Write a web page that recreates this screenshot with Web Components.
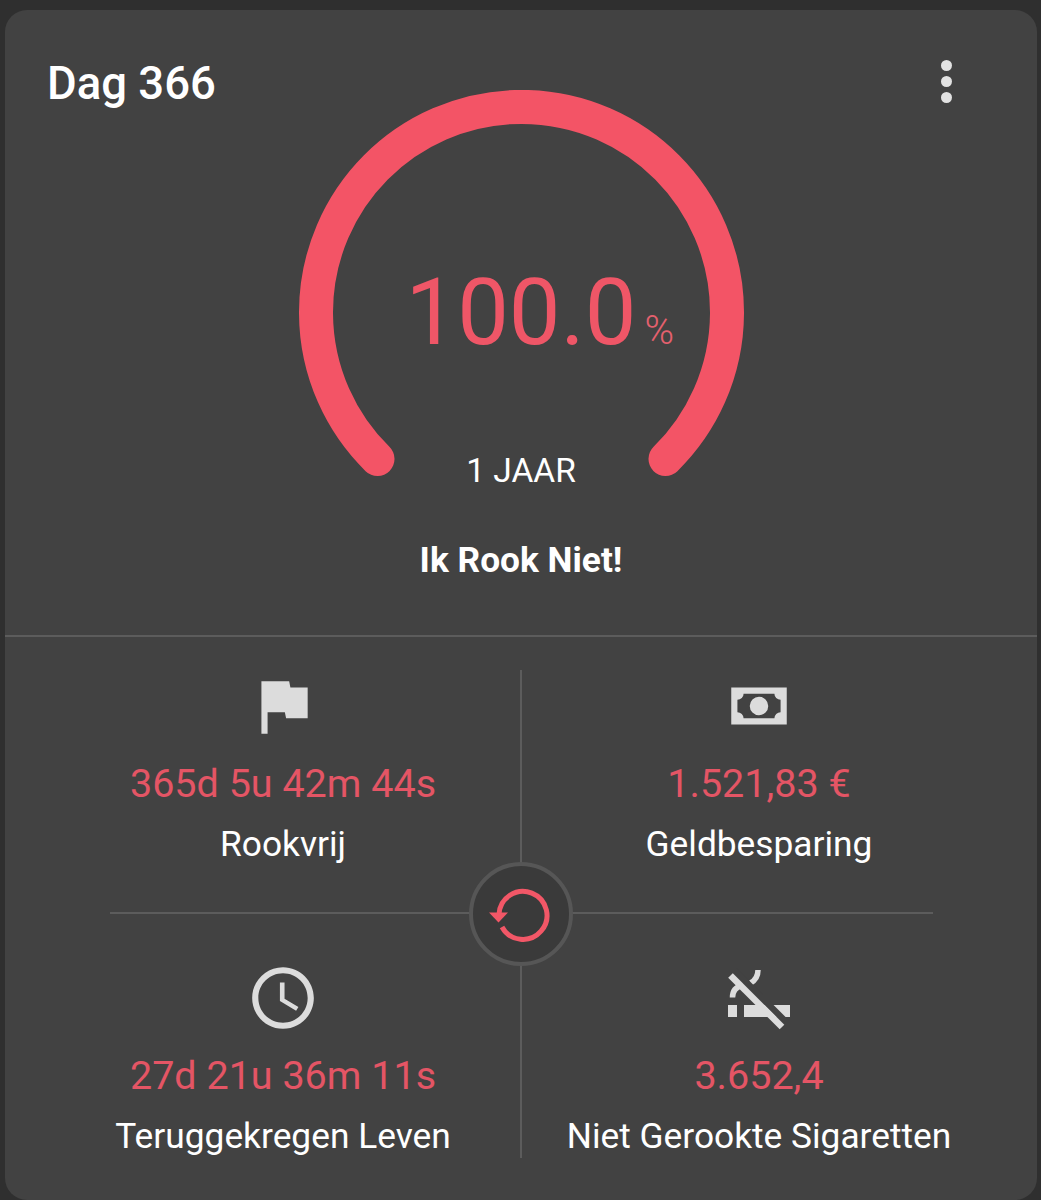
<!DOCTYPE html><html><head><meta charset="utf-8"><style>html,body{margin:0;background:#2f2f2f}body{height:1200px;overflow:hidden;font-family:Roboto,sans-serif}</style></head><body>
<quit-card title="Dag 366" subtitle="Ik Rook Niet!">
  <quit-gauge slot="gauge" value="100.0" unit="%" caption="1 JAAR"></quit-gauge>
  <quit-stat slot="stats" value="365d 5u 42m 44s" label="Rookvrij">
    <svg slot="icon" width="74" height="74" viewBox="0 0 24 24" fill="#dcdcdc"><path d="M14.4 6L14 4H5v17h2v-7h5.6l.4 2h7V6z"/></svg>
  </quit-stat>
  <quit-stat slot="stats" value="1.521,83 €" label="Geldbesparing">
    <svg slot="icon" width="74" height="74" viewBox="0 0 24 24" fill="#dcdcdc"><path fill-rule="evenodd" d="M3,6H21V18H3V6M12,9A3,3 0 0,1 15,12A3,3 0 0,1 12,15A3,3 0 0,1 9,12A3,3 0 0,1 12,9M7,8A2,2 0 0,1 5,10V14A2,2 0 0,1 7,16H17A2,2 0 0,1 19,14V10A2,2 0 0,1 17,8H7Z"/></svg>
  </quit-stat>
  <quit-stat slot="stats" class="low" value="27d 21u 36m 11s" label="Teruggekregen Leven">
    <svg slot="icon" width="74" height="74" viewBox="0 0 24 24" fill="#dcdcdc"><path d="M11.99 2C6.47 2 2 6.48 2 12s4.47 10 9.99 10C17.52 22 22 17.52 22 12S17.52 2 11.99 2zM12 20c-4.42 0-8-3.58-8-8s3.58-8 8-8 8 3.58 8 8-3.58 8-8 8zm.5-13H11v6l5.25 3.15.75-1.23-4.5-2.67z"/></svg>
  </quit-stat>
  <quit-stat slot="stats" class="low" value="3.652,4" label="Niet Gerookte Sigaretten">
    <svg slot="icon" width="72" height="72" viewBox="723 962 72 72" fill="none"><rect x="728" y="1005" width="9" height="12" fill="#dcdcdc"/><rect x="744" y="1005" width="46" height="12" fill="#dcdcdc"/><path d="M732.5 997.5C732.5 991 736 987 742 985.5M758 970C758 976 755 980.500 750.500 983" stroke="#dcdcdc" stroke-width="5.500"/><path d="M734.500 970.500L786.500 1022.500" stroke="#424242" stroke-width="6.500"/><path d="M730.500 975.500L782 1027" stroke="#dcdcdc" stroke-width="6.500"/></svg>
  </quit-stat>
</quit-card>
<script>
class QuitGauge extends HTMLElement{constructor(){super();const a=n=>this.getAttribute(n);this.attachShadow({mode:'open'}).innerHTML=`<style>:host{display:block;position:relative;width:445px;height:400px;margin:0 auto;font-family:Roboto,sans-serif}
svg{display:block}
.pct{position:absolute;left:0;right:0;top:158px;display:flex;justify-content:center;color:#ef5667;line-height:130px}
.nw{position:relative}
.n{font-size:92px;font-weight:400}.u{position:absolute;left:100%;bottom:51px;line-height:44px;font-size:40px;font-weight:300;margin-left:8px;color:#e4606e}
.c{position:absolute;left:0;right:0;top:359px;text-align:center;color:#fff;font-size:33.500px;line-height:44px}</style>
<svg width="445" height="400" viewBox="0 0 445 400"><path d="M78.500 369A205.500 205.500 0 1 1 366.500 369" fill="none" stroke="#f35466" stroke-width="34" stroke-linecap="round"/></svg>
<div class="pct"><span class="nw"><span class="n">${a('value')}</span><span class="u">${a('unit')}</span></span></div><div class="c">${a('caption')}</div>`}}
customElements.define('quit-gauge',QuitGauge);
class QuitStat extends HTMLElement{constructor(){super();const a=n=>this.getAttribute(n);this.attachShadow({mode:'open'}).innerHTML=`<style>:host{display:flex;flex-direction:column;align-items:center;box-sizing:border-box;color:#fff}
:host(.low){padding-top:49px}
.i{height:72px;display:flex;align-items:center;justify-content:center}
.v{margin-top:20px;font-size:39.500px;line-height:44px;color:#e45565}
.l{margin-top:16px;font-size:35.300px;line-height:44px;color:#fff}</style>
<div class="i"><slot name="icon"></slot></div><div class="v">${a('value')}</div><div class="l">${a('label')}</div>`}}
customElements.define('quit-stat',QuitStat);
class QuitCard extends HTMLElement{constructor(){super();const a=n=>this.getAttribute(n);this.attachShadow({mode:'open'}).innerHTML=`<style>:host{display:block;box-sizing:border-box;margin:10px 4px 0 5px;height:1190px;background:#424242;border-radius:22px;color:#fff;font-family:Roboto,sans-serif}
.head{display:flex;justify-content:space-between;align-items:center;padding:47px 85px 0 42px;margin-bottom:-21px}
.t{font-size:45.500px;font-weight:500;line-height:54px}
.dots{display:flex;flex-direction:column;gap:5px;margin-top:-5px}.dots i{display:block;width:11px;height:11px;border-radius:50%;background:#e2e2e2}
.name{margin-top:48px;height:44px;text-align:center;font-size:35.300px;font-weight:700;line-height:44px}
.hr{margin-top:53px;height:2px;background:#5c5c5c}
.grid{position:relative;display:grid;grid-template-columns:1fr 1fr;grid-template-rows:243px 245px;margin:33px 40px 0}
.vl{position:absolute;left:475px;top:0;bottom:0;width:2px;background:#5c5c5c}
.hl{position:absolute;left:65px;width:823px;top:242px;height:2px;background:#5c5c5c}
.btn{position:absolute;left:424px;top:192px;width:96px;height:96px;border:4px solid #565656;border-radius:50%;background:#3a3a3a}
.btn svg{display:block;width:96px;height:96px}
</style>
<div class="head"><div class="t">${a('title')}</div><div class="dots"><i></i><i></i><i></i></div></div>
<slot name="gauge"></slot>
<div class="name">${a('subtitle')}</div>
<div class="hr"></div>
<div class="grid"><slot name="stats"></slot><div class="vl"></div><div class="hl"></div>
<div class="btn"><svg viewBox="473 865 96 96" fill="none"><path d="M499 913.500A24 24 0 1 1 502 926" stroke="#f25767" stroke-width="5"/><path d="M489 911.500H508L498.500 921.500Z" fill="#f25767"/></svg></div></div>`}}
customElements.define('quit-card',QuitCard);
</script></body></html>
